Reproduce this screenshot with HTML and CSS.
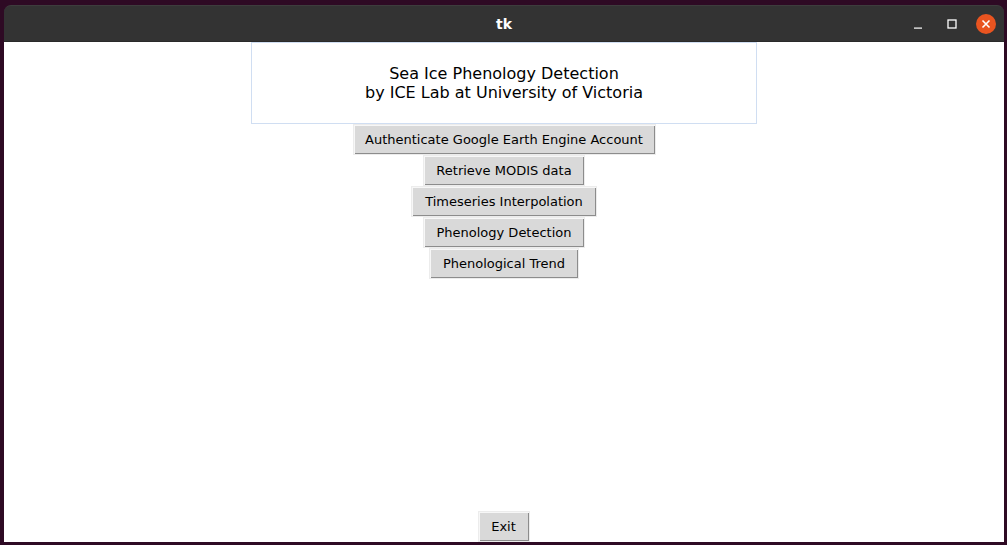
FILE: index.html
```html
<!DOCTYPE html>
<html>
<head>
<meta charset="utf-8">
<link rel="stylesheet" href="styles.css">
</head>
<body>
<div class="window">
  <div class="titlebar">
    <div class="spacer"></div>
    <div class="title">tk</div>
    <div class="controls">
      <span class="ctl"><svg width="20" height="20" viewBox="0 0 20 20"><rect x="6" y="13.5" width="8" height="1.2" fill="#fff"/></svg></span>
      <span class="ctl"><svg width="20" height="20" viewBox="0 0 20 20"><rect x="6" y="6" width="8" height="8" fill="none" stroke="#fff" stroke-width="1.3"/></svg></span>
      <span class="ctl close"><svg width="20" height="20" viewBox="0 0 20 20"><circle cx="10" cy="10" r="10" fill="#e95420"/><path d="M6.5 6.5 L13.5 13.5 M13.5 6.5 L6.5 13.5" stroke="#fff" stroke-width="1.6"/></svg></span>
    </div>
  </div>
  <div class="content">
    <div class="header">
      <div>Sea Ice Phenology Detection</div>
      <div>by ICE Lab at University of Victoria</div>
    </div>
    <button class="btn b1">Authenticate Google Earth Engine Account</button>
    <button class="btn b2">Retrieve MODIS data</button>
    <button class="btn b3">Timeseries Interpolation</button>
    <button class="btn b4">Phenology Detection</button>
    <button class="btn b5">Phenological Trend</button>
    <button class="btn exit">Exit</button>
  </div>
</div>
</body>
</html>
```
FILE: styles.css
```css
html, body {
  margin: 0;
  padding: 0;
  width: 1007px;
  height: 545px;
  background: #2e0a24;
  overflow: hidden;
  font-family: "DejaVu Sans", sans-serif;
}
.window {
  margin: 5px 0 0 4px;
  width: 1000px;
  height: 537px;
  display: flex;
  flex-direction: column;
}
.titlebar {
  height: 37px;
  flex: none;
  background: #333333;
  border-radius: 7px 7px 0 0;
  box-sizing: border-box;
  border-top: 1px solid #3d3d3d;
  border-bottom: 1px solid #2a2a2a;
  display: grid;
  grid-template-columns: 1fr auto 1fr;
  align-items: center;
}
.title {
  color: #ffffff;
  font-weight: bold;
  font-size: 14px;
}
.controls {
  justify-self: end;
  display: flex;
  align-items: center;
  gap: 14px;
  padding-right: 8px;
}
.ctl {
  display: flex;
  width: 20px;
  height: 20px;
}
.content {
  flex: 1;
  background: #ffffff;
  display: flex;
  flex-direction: column;
  align-items: center;
}
.header {
  width: 506px;
  height: 82px;
  box-sizing: border-box;
  border: 1px solid #d0def2;
  display: flex;
  flex-direction: column;
  justify-content: center;
  align-items: center;
  font-size: 16px;
  line-height: 19px;
  color: #000;
}
.btn {
  font-family: "DejaVu Sans", sans-serif;
  font-size: 13px;
  white-space: nowrap;
  color: #000;
  background: #d9d9d9;
  height: 31px;
  box-sizing: border-box;
  margin: 0;
  padding: 0;
  border: 1px solid #ececec;
  box-shadow: inset 1px 1px 0 #f7f7f7, inset -1px -1px 0 #8c8c8c;
  border-radius: 0;
}
.b1 { width: 303px; }
.b2 { width: 162px; }
.b3 { width: 186px; }
.b4 { width: 162px; }
.b5 { width: 150px; }
.exit {
  margin-top: auto;
  margin-right: 1px;
  width: 52px;
  height: 31px;
}
```
